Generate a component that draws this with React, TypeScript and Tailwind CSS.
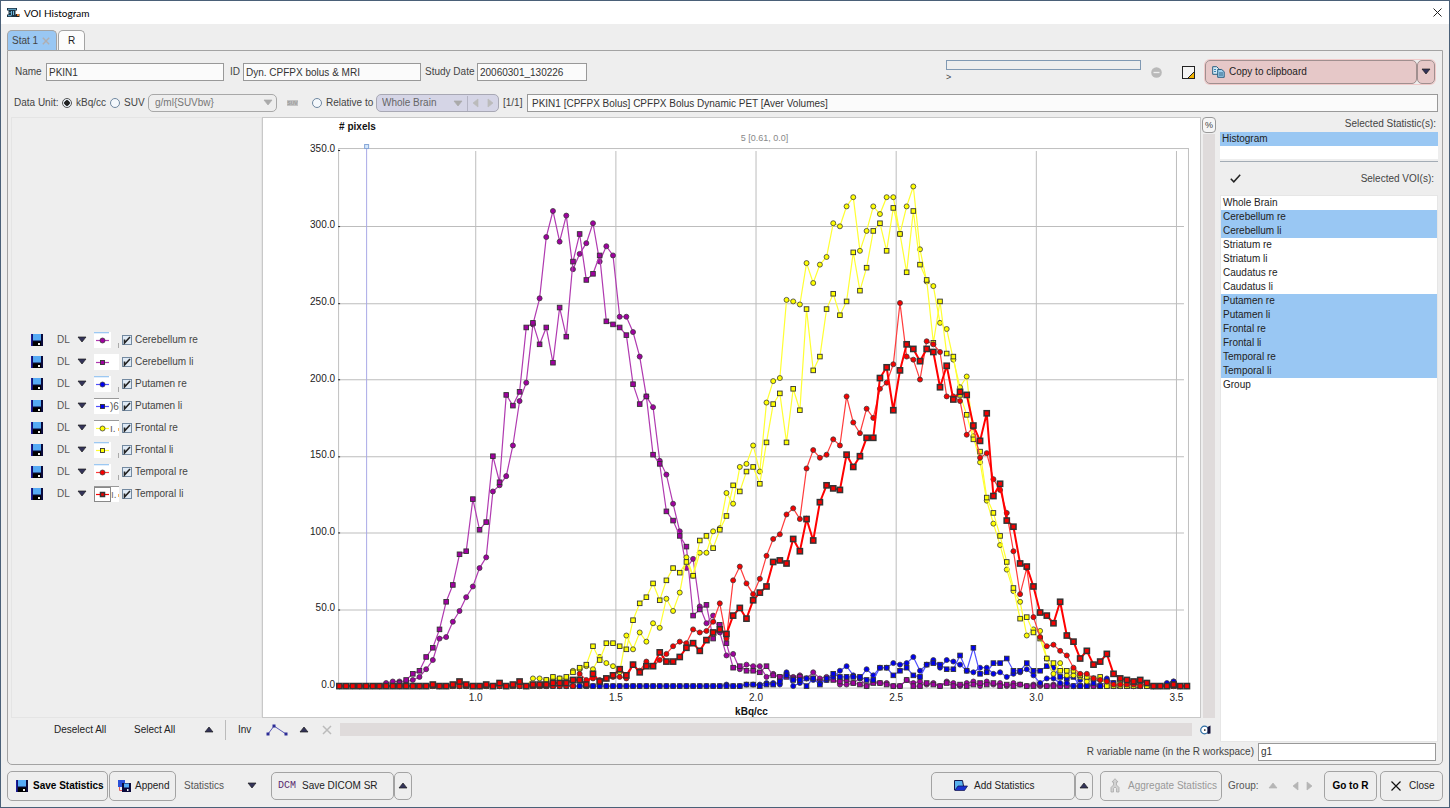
import { useState, type ReactNode } from 'react';
import clsx from 'clsx';

type Shape = 'circle' | 'square';

interface Series {
  name: string;
  color: string;
  line: string;
  shape: Shape;
  bold?: boolean;
  swatch: 'short' | 'plain' | 'six' | 'one' | 'active';
  start: number;
  values: number[];
}

const BINS = 128;

// values begin at bin `start`, every bin outside is zero
const SERIES: Series[] = [
  {
    name: 'Cerebellum re', color: '#a000a0', line: '#b03ab0', shape: 'circle', swatch: 'short', start: 7,
    values: [
      2, 3, 3, 3, 4, 6, 11, 17, 31, 32, 42, 49, 58, 65, 77, 84, 127, 131, 137, 157, 186, 198, 236, 253, 293,
      310, 290, 307, 272, 282, 289, 302, 277, 287, 281, 241, 241, 231, 215, 189, 182, 147, 138, 119, 101, 77,
      83, 52, 41, 46, 35, 20, 21, 11, 14, 13, 13, 6, 8, 6, 8, 6, 7, 5, 9, 5, 6, 5, 1, 1, 2, 5, 0, 3, 2, 2, 0,
      0, 4, 2, 3, 1, 2, 0, 3, 2, 0, 2, 3, 0, 3, 1, 2, 0, 2, 1, 0, 1, 0, 0, 1, 0, 1, 0, 0, 1, 0, 0, 0, 1, 0, 0,
      0, 0, 0, 0, 0, 0, 3,
    ],
  },
  {
    name: 'Cerebellum li', color: '#a000a0', line: '#b03ab0', shape: 'square', swatch: 'plain', start: 9,
    values: [
      2, 4, 8, 10, 19, 25, 37, 55, 66, 86, 88, 122, 102, 107, 150, 133, 190, 183, 192, 234, 237, 223, 234, 211,
      247, 228, 277, 295, 265, 269, 281, 238, 236, 234, 229, 197, 184, 189, 151, 145, 114, 108, 98, 91, 46, 50,
      53, 31, 40, 28, 12, 13, 10, 10, 9, 13, 7, 6, 6, 5, 6, 5, 5, 3, 4, 4, 3, 4, 2, 1, 0, 2, 2, 1, 0, 0, 4, 0, 0,
      2, 1, 0, 2, 0, 1, 0, 1, 2, 1, 2, 0, 1, 0, 1, 0, 0, 1, 0, 0, 0,
    ],
  },
  {
    name: 'Putamen re', color: '#0000f0', line: '#5050ff', shape: 'circle', swatch: 'short', start: 58,
    values: [
      1, 0, 0, 1, 1, 1, 2, 2, 1, 9, 0, 2, 5, 4, 2, 4, 6, 10, 13, 7, 5, 11, 7, 12, 12, 15, 14, 15, 19, 10, 14, 17,
      12, 17, 16, 14, 10, 9, 12, 12, 8, 9, 6, 8, 9, 11, 7, 2, 5, 5, 2, 2, 0, 4, 5, 4, 4, 5, 2, 0, 0, 0, 0, 0, 0,
      0, 2, 3, 0, 0,
    ],
  },
  {
    name: 'Putamen li', color: '#0000f0', line: '#5050ff', shape: 'square', swatch: 'six', start: 61,
    values: [
      1, 1, 0, 1, 1, 3, 7, 4, 4, 0, 5, 1, 5, 8, 6, 6, 6, 6, 4, 4, 12, 12, 7, 10, 12, 7, 6, 14, 15, 14, 11, 11,
      20, 10, 25, 8, 9, 15, 15, 18, 10, 10, 15, 10, 10, 13, 12, 6, 5, 6, 0, 0, 2, 0, 3, 2,
    ],
  },
  {
    name: 'Frontal re', color: '#ffff00', line: '#ffff33', shape: 'circle', swatch: 'one', start: 29,
    values: [
      5, 5, 4, 5, 5, 5, 10, 11, 13, 11, 19, 15, 13, 9, 33, 24, 35, 29, 41, 38, 57, 49, 61, 84, 72, 87, 87, 101,
      103, 126, 119, 143, 145, 157, 140, 185, 199, 201, 252, 251, 249, 276, 263, 275, 280, 302, 300, 313, 319,
      284, 297, 313, 308, 319, 319, 295, 313, 326, 285, 264, 261, 237, 233, 213, 195, 202, 163, 146, 121, 106,
      92, 76, 62, 55, 33, 37, 36, 18, 8, 15, 7, 7, 6, 3, 5, 4, 2,
    ],
  },
  {
    name: 'Frontal li', color: '#ffff00', line: '#ffff33', shape: 'square', swatch: 'short', start: 31,
    values: [
      4, 6, 5, 6, 9, 12, 14, 26, 17, 28, 28, 26, 24, 43, 54, 58, 67, 56, 69, 77, 74, 81, 72, 95, 98, 90, 102,
      111, 131, 127, 140, 143, 132, 159, 184, 191, 159, 194, 180, 246, 206, 215, 246, 256, 242, 251, 283, 258,
      273, 297, 302, 284, 312, 295, 270, 310, 275, 265, 224, 251, 217, 215, 190, 177, 161, 153, 123, 113, 98,
      81, 64, 44, 45, 35, 31, 18, 15, 10, 10, 10, 7, 6, 5, 6, 0, 0, 3,
    ],
  },
  {
    name: 'Temporal re', color: '#f80000', line: '#ff3c3c', shape: 'circle', swatch: 'short', start: 36,
    values: [
      8, 4, 5, 4, 5, 6, 6, 5, 14, 10, 16, 13, 17, 21, 26, 29, 28, 37, 35, 36, 42, 54, 31, 69, 78, 67, 60, 70, 85,
      96, 99, 112, 116, 109, 142, 154, 149, 151, 161, 157, 189, 172, 165, 181, 175, 194, 198, 210, 250, 215, 213,
      200, 225, 223, 218, 189, 189, 186, 164, 169, 149, 152, 135, 128, 113, 88, 60, 77, 45, 32, 26, 27, 23, 20,
      12, 8, 8, 5, 4, 3, 1, 1, 1, 1, 0, 2,
    ],
  },
  {
    name: 'Temporal li', color: '#f80000', line: '#ff0000', shape: 'square', bold: true, swatch: 'active', start: 14,
    values: [
      1, 0, 0, 1, 3, 1, 0, 0, 1, 0, 2, 0, 1, 3, 0, 1, 1, 1, 2, 2, 2, 4, 4, 1, 8, 3, 5, 7, 11, 7, 14, 9, 13, 13, 22,
      16, 16, 19, 25, 28, 23, 30, 35, 37, 34, 46, 51, 44, 56, 61, 65, 81, 82, 80, 96, 88, 109, 95, 120, 131, 129,
      128, 151, 143, 150, 162, 162, 201, 208, 180, 206, 223, 220, 212, 220, 218, 195, 209, 187, 192, 190, 170,
      160, 178, 124, 132, 108, 104, 80, 78, 65, 48, 46, 41, 55, 33, 29, 18, 23, 14, 16, 21, 8, 5, 4, 3, 4, 2, 0,
      0, 0, 1, 0, 0,
    ],
  },
];

const VOIS = [
  'Whole Brain', 'Cerebellum re', 'Cerebellum li', 'Striatum re', 'Striatum li', 'Caudatus re', 'Caudatus li',
  'Putamen re', 'Putamen li', 'Frontal re', 'Frontal li', 'Temporal re', 'Temporal li', 'Group',
];

const px = (bin: number) => 76.3 + (bin * 20) / 3;
const py = (value: number) => 567.5 - value * 1.531;

const fieldClass = 'h-[18px] border border-[#999] bg-[#fbfbfb] px-0.5 text-[10px] text-[#333] outline-none';
const buttonClass = 'flex items-center rounded-[5px] border-[1.5px] border-[#a3a3a3] bg-[#eee] whitespace-nowrap';

const Tri = ({ dir, color = '#33335a' }: { dir: 'up' | 'down' | 'left' | 'right'; color?: string }) => {
  const points = {
    up: '1,7 9,7 5,2',
    down: '1,2 9,2 5,7',
    left: '7,1 7,9 2,5',
    right: '2,1 2,9 7,5',
  }[dir];
  return (
    <svg width="10" height="10" viewBox="0 0 10 10" className="shrink-0" aria-hidden="true">
      <polygon points={points} fill={color} stroke={color === '#33335a' ? '#1c1c1c' : color} strokeWidth="0.7" />
    </svg>
  );
};

const Floppy = ({ size = 12 }: { size?: number }) => (
  <svg width={size} height={size} viewBox="0 0 12 12" className="shrink-0" aria-hidden="true">
    <rect width="12" height="12" fill="#0a0a3c" />
    <rect x="0" y="0" width="1.5" height="12" fill="#1c1c9c" />
    <rect x="2" y="0" width="8" height="6.5" fill="#55aaf5" />
    <rect x="2" y="7.5" width="8" height="4.5" fill="#000" />
    <rect x="7" y="9" width="2" height="2" fill="#eee" />
  </svg>
);

const Marker = ({ x, y, series, size }: { x: number; y: number; series: Series; size?: number }) => {
  const w = size ?? (series.bold ? 5.2 : 4.6);
  return series.shape === 'circle' ? (
    <circle cx={x} cy={y} r={2.5} fill={series.color} stroke="#3c3c3c" strokeWidth="0.8" />
  ) : (
    <rect
      x={x - w / 2} y={y - w / 2} width={w} height={w}
      fill={series.color} stroke="#333" strokeWidth={series.bold ? 1.5 : 0.9}
    />
  );
};

const Histogram = ({ visible }: { visible: Record<string, boolean> }) => (
  <svg viewBox="0 0 936 598" className="block h-auto w-full" fontFamily="Liberation Sans, Arial, sans-serif" fontSize="10" role="img" aria-label="VOI histogram">
    <text x="76" y="12" fontWeight="bold" fill="#111">{'# pixels'}</text>
    <text x="501" y="23" textAnchor="middle" fontSize="9" fill="#888">5 [0.61, 0.0]</text>
    <rect x="75.5" y="30.5" width="849" height="539" fill="none" stroke="#c0c0c0" />
    {[0, 50, 100, 150, 200, 250, 300, 350].map((v) => (
      <g key={v}>
        {v > 0 && v < 350 && (
          <line x1="76" x2="920" y1={Math.round(py(v)) + 0.5} y2={Math.round(py(v)) + 0.5} stroke="#bdbdbd" />
        )}
        <rect x="75" y={Math.round(py(v))} width="2" height="1" fill="#222" />
        <text x="72" y={py(v) + 2} textAnchor="end" fill="#222">{v.toFixed(1)}</text>
      </g>
    ))}
    {[1, 1.5, 2, 2.5, 3, 3.5].map((v, i) => (
      <g key={v}>
        <line x1={212.5 + i * 140} x2={212.5 + i * 140} y1="33" y2="569" stroke="#bdbdbd" />
        <text x={212.5 + i * 140} y="582" textAnchor="middle" fill="#222">{v.toFixed(1)}</text>
      </g>
    ))}
    <line x1="103.5" x2="103.5" y1="30" y2="569" stroke="#a9a9e6" />
    <rect x="101.5" y="26.5" width="4" height="4" fill="#d6e8fa" stroke="#86a6d8" />
    <text x="488" y="596" textAnchor="middle" fontWeight="bold" fill="#111">kBq/cc</text>
    {SERIES.filter((s) => visible[s.name]).map((s) => {
      const data = Array.from({ length: BINS }, (_, i) => s.values[i - s.start] ?? 0);
      return (
        <g key={s.name}>
          <polyline
            points={data.map((v, i) => `${px(i)},${py(v)}`).join(' ')}
            fill="none" stroke={s.line} strokeWidth={s.bold ? 2 : 1.2}
          />
          {data.map((v, i) => <Marker key={i} x={px(i)} y={py(v)} series={s} />)}
        </g>
      );
    })}
  </svg>
);

const Swatch = ({ series }: { series: Series }) => {
  const { swatch } = series;
  return (
    <svg width="25" height="16" viewBox="0 0 25 16" className="shrink-0" fontSize="10" fontFamily="Liberation Sans, Arial, sans-serif" aria-hidden="true">
      <rect width={swatch === 'short' ? 17 : 25} height="16" fill="#fff" />
      {swatch === 'short' && <rect width="15" height="1.3" fill="#9cc8f2" />}
      {swatch === 'short' && <rect x="24" y="11" width="1" height="5" fill="#aaa" />}
      {(swatch === 'six' || swatch === 'one' || swatch === 'active') && <rect width="25" height="1" fill="#999" />}
      {swatch === 'six' && <text x="16" y="12" fill="#555">)6</text>}
      {swatch === 'one' && <text x="16" y="12" fill="#555">ı.</text>}
      {swatch === 'active' && <text x="17" y="12" fill="#666">ı.</text>}
      {(swatch === 'one' || swatch === 'active') && <rect x="24" y="8" width="1" height="3" fill="#f3b765" />}
      {swatch === 'active' && <rect x="0.5" y="1.5" width="16" height="14" fill="#fff" stroke="#888" />}
      <line x1="2" x2="15" y1="8.5" y2="8.5" stroke={series.line} strokeWidth="1.2" />
      <Marker x={8.5} y={8.5} series={series} size={4} />
    </svg>
  );
};

const Check = () => (
  <svg width="10" height="10" viewBox="0 0 10 10" className="pointer-events-none absolute top-0 left-0" aria-hidden="true">
    <path d="M2.5 4.5v3.5L8 2" fill="none" stroke="#222" strokeWidth="1.6" />
  </svg>
);

interface RadioProps {
  name: string;
  label: string;
  defaultChecked?: boolean;
  className?: string;
}

const Radio = ({ name, label, defaultChecked, className }: RadioProps) => (
  <label className={clsx('flex items-center gap-1 whitespace-nowrap', className)}>
    <input
      type="radio"
      name={name}
      defaultChecked={defaultChecked}
      className="h-[10px] w-[10px] appearance-none rounded-full border border-[#6f87a0] bg-[#f4f8fc] checked:border-[#555] checked:bg-[radial-gradient(#222_0_2.5px,#e9f0f7_3px)]"
    />
    {label}
  </label>
);

const IconButton = ({ label, className, children }: { label: string; className?: string; children: ReactNode }) => (
  <button type="button" aria-label={label} className={clsx('flex shrink-0 items-center justify-center', className)}>
    {children}
  </button>
);

const ListRow = ({ name, selected, onClick }: { name: string; selected: boolean; onClick?: () => void }) => (
  <li>
    <button
      type="button"
      aria-pressed={selected}
      onClick={onClick}
      className={clsx('block h-[14px] w-full px-0.5 text-left leading-[14px] text-[#222]', selected && 'bg-[#99c7f3]')}
    >
      {name}
    </button>
  </li>
);

const TitleBar = () => (
  <header className="flex h-[23px] items-center bg-white pr-1 pl-1.5 text-black">
    <svg width="13" height="9" viewBox="0 0 13 9" aria-hidden="true">
      <path d="M0 0h10v2.5H8.500v4H10V9H0V6.500h1.500v-4H0z" fill="#1d3444" />
      <path d="M1 1.300h8M2.500 4.500h1M6.500 3v4M4.500 3v4M1 7.700h3.500" stroke="#6fb8dc" strokeWidth="1" />
      <rect x="9" y="6" width="3.500" height="3" fill="#222" />
      <rect x="10" y="6" width="2" height="2" fill="#e07a2c" />
    </svg>
    <h1 className="ml-1 font-[Lato,sans-serif] text-[10px]">VOI Histogram</h1>
    <IconButton label="Close window" className="ml-auto h-4 w-4">
      <svg width="9" height="9" viewBox="0 0 9 9"><path d="M.5.5l8 8M8.500.5l-8 8" stroke="#222" /></svg>
    </IconButton>
  </header>
);

const InfoRow = () => (
  <div className="mt-[9px] flex h-6 items-center pr-[7px] pl-[7px]">
    <label htmlFor="name" className="w-[31px]">Name</label>
    <input id="name" defaultValue="PKIN1" className={clsx(fieldClass, 'w-[178px]')} />
    <label htmlFor="study-id" className="ml-1.5 w-[13px]">ID</label>
    <input id="study-id" defaultValue="Dyn. CPFPX bolus & MRI" className={clsx(fieldClass, 'w-[178px]')} />
    <label htmlFor="study-date" className="ml-1 w-[52px] whitespace-nowrap">Study Date</label>
    <input id="study-date" defaultValue="20060301_130226" className={clsx(fieldClass, 'w-[110px]')} />
    <div className="ml-auto flex h-6 w-[195px] flex-col">
      <div className="h-[10px] shrink-0 border border-[#8099b3] bg-[#eee]" role="progressbar" aria-label="Progress" />
      <span className="text-[9px] leading-[14px]">&gt;</span>
    </div>
    <IconButton label="Stop" className="ml-[9px] h-4 w-3">
      <svg width="11" height="11" viewBox="0 0 11 11">
        <circle cx="5.500" cy="5.500" r="5.300" fill="#b9b9b9" />
        <path d="M2.500 5.500h6" stroke="#eee" strokeWidth="1.300" />
      </svg>
    </IconButton>
    <IconButton label="Notes" className="ml-5 h-4 w-[13px]">
      <svg width="13" height="13" viewBox="0 0 13 13">
        <rect x=".5" y=".5" width="12" height="12" fill="#f4f4f4" stroke="#222" />
        <path d="M12 6v6H6z" fill="#f2b200" />
        <path d="M12.500 5.500l-7 7" stroke="#222" />
      </svg>
    </IconButton>
    <div className="ml-[10px] flex h-6 rounded-[5px] shadow-[0_0_0_1px_#f0caca]">
      <button type="button" className="flex w-[212px] items-center gap-1 rounded-[5px] border-[1.5px] border-[#a08f8f] bg-[#e6c8c8] pl-1.5 text-[#222]">
        <svg width="13" height="12" viewBox="0 0 13 12" aria-hidden="true">
          <path d="M.7.700h4l2 2v5.600h-6z" fill="#d4eaf7" stroke="#2a5f80" />
          <path d="M2 3.500h2M2 5.500h2" stroke="#3d87b5" />
          <path d="M5.700 3.500h4l2.500 2.200v5.600H5.700z" fill="#9fd0ee" stroke="#2a5f80" />
          <path d="M7 7h4M7 9h4" stroke="#2a5f80" />
        </svg>
        Copy to clipboard
      </button>
      <IconButton label="Clipboard options" className="w-[18px] rounded-[5px] border-[1.5px] border-[#a08f8f] bg-[#e6c8c8]">
        <Tri dir="down" />
      </IconButton>
    </div>
  </div>
);

const UnitRow = () => (
  <div className="mt-[10px] flex h-[18px] items-center pr-1 pl-[6px]">
    <span className="w-[48px] whitespace-nowrap">Data Unit:</span>
    <Radio name="unit" label="kBq/cc" defaultChecked className="w-[48px]" />
    <Radio name="unit" label="SUV" className="w-[38px]" />
    <div className="relative">
      <select aria-label="SUV type" disabled className="h-[18px] w-[129px] appearance-none rounded-[5px] border-[1.5px] border-[#a8a8a8] bg-[#eee] pl-1.5 text-[#777] opacity-100">
        <option>{'g/ml{SUVbw}'}</option>
      </select>
      <span className="pointer-events-none absolute top-1 right-1"><Tri dir="down" color="#aaa" /></span>
    </div>
    <span className="ml-[10px] flex h-[6px] w-[11px] items-center justify-center bg-[#c4c4c4] text-[5px] font-bold text-[#999]">SUV</span>
    <Radio name="relative" label="Relative to" className="ml-[14px] w-[64px]" />
    <div className="flex h-[18px] w-[123px] items-center rounded-[5px] border-[1.5px] border-[#a8a8b4] bg-[#d5d5e6]">
      <div className="relative flex-1 border-r border-[#b4b4c4]">
        <select aria-label="Reference VOI" disabled className="h-[15px] w-full appearance-none bg-transparent pl-[5px] text-[#666] opacity-100">
          <option>Whole Brain</option>
        </select>
        <span className="pointer-events-none absolute top-[3px] right-1"><Tri dir="down" color="#aaa" /></span>
      </div>
      <IconButton label="Previous VOI" className="w-4"><Tri dir="left" color="#bbb" /></IconButton>
      <IconButton label="Next VOI" className="w-3.5"><Tri dir="right" color="#bbb" /></IconButton>
    </div>
    <span className="ml-1 w-6">[1/1]</span>
    <input
      aria-label="Series"
      defaultValue="PKIN1 [CPFPX Bolus] CPFPX Bolus Dynamic PET [Aver Volumes]"
      className={clsx(fieldClass, 'min-w-0 flex-1 pl-1')}
    />
  </div>
);

interface LegendProps {
  visible: Record<string, boolean>;
  onToggle: (name: string) => void;
}

const Legend = ({ visible, onToggle }: LegendProps) => (
  <ul className="flex w-[251px] shrink-0 flex-col justify-center border border-[#e4e4e4] pl-[19px]">
    {SERIES.map((s) => (
      <li key={s.name} className="flex h-[22px] items-center">
        <IconButton label={`Save ${s.name}`}><Floppy /></IconButton>
        <button type="button" className="ml-[14px] w-5 text-left text-[#555]">DL</button>
        <IconButton label={`${s.name} options`} className="mr-[7px]"><Tri dir="down" /></IconButton>
        <Swatch series={s} />
        <label className="ml-[3px] flex items-center gap-[3px]">
          <span className="relative h-[10px] w-[10px]">
            <input
              type="checkbox"
              checked={visible[s.name]}
              onChange={() => onToggle(s.name)}
              className="block h-[10px] w-[10px] appearance-none border border-[#7389a0] bg-[#dfeaf5]"
            />
            {visible[s.name] && <Check />}
          </span>
          {s.name}
        </label>
      </li>
    ))}
  </ul>
);

const ChartToolbar = ({ onAll }: { onAll: (value: boolean) => void }) => (
  <div className="flex h-6 items-center pl-[43px] text-[#222]">
    <button type="button" onClick={() => onAll(false)} className="w-[80px] text-left">Deselect All</button>
    <button type="button" onClick={() => onAll(true)} className="w-[70px] text-left">Select All</button>
    <IconButton label="Selection options"><Tri dir="up" /></IconButton>
    <span className="ml-[11px] h-5 w-px bg-[#bbb]" />
    <button type="button" className="ml-3 w-[28px] text-left">Inv</button>
    <IconButton label="Line style">
      <svg width="22" height="12" viewBox="0 0 22 12">
        <path d="M2 10l6-8 12 8" fill="none" stroke="#5a5ab4" />
        <path d="M.5 8.500h3v3h-3zM6.500.5h3v3h-3zM18.500 8.500h3v3h-3z" fill="#2c2c96" />
      </svg>
    </IconButton>
    <IconButton label="Line style options" className="ml-[11px]"><Tri dir="up" /></IconButton>
    <IconButton label="Clear" className="ml-[13px]">
      <svg width="10" height="10" viewBox="0 0 10 10"><path d="M1 1l8 8M9 1L1 9" stroke="#bbb" strokeWidth="1.500" /></svg>
    </IconButton>
    <div className="ml-2 h-[13px] flex-1 bg-[#dfdbdb]" />
    <IconButton label="Reset zoom" className="mr-[5px] ml-2">
      <svg width="11" height="10" viewBox="0 0 11 10">
        <circle cx="4.500" cy="5" r="3.800" fill="#fff" stroke="#2f6fa5" strokeWidth="1.200" />
        <rect x="4" y="4.300" width="1.500" height="1.500" fill="#222" />
        <path d="M7.500 2l3-1.500v8l-3 .5z" fill="#14143c" />
      </svg>
    </IconButton>
  </div>
);

const Sidebar = () => {
  const [selected, setSelected] = useState(
    VOIS.filter((v) => /^(Cerebellum|Putamen|Frontal|Temporal)/.test(v))
  );
  const toggle = (name: string) =>
    setSelected((prev) => (prev.includes(name) ? prev.filter((v) => v !== name) : [...prev, name]));

  return (
    <aside className="flex w-[218px] shrink-0 flex-col">
      <h2 className="h-[15px] pr-0.5 text-right leading-[13px]">Selected Statistic(s):</h2>
      <ul aria-label="Selected statistics" className="h-[27px] bg-white">
        <ListRow name="Histogram" selected />
      </ul>
      <hr className="mt-[2px] border-[#a3acb5]" />
      <div className="flex h-[33px] items-center justify-between pr-1 pl-[10px]">
        <IconButton label="Apply selection">
          <svg width="11" height="9" viewBox="0 0 11 9"><path d="M.8 4.800l3 3L10.200.8" fill="none" stroke="#222" strokeWidth="1.500" /></svg>
        </IconButton>
        <h2>Selected VOI(s):</h2>
      </div>
      <ul aria-label="Selected VOIs" className="flex-1 border border-[#e6e6e6] bg-white">
        {VOIS.map((v) => (
          <ListRow key={v} name={v} selected={selected.includes(v)} onClick={() => toggle(v)} />
        ))}
      </ul>
    </aside>
  );
};

const ActionBar = () => (
  <footer className="mt-[6px] flex h-[30px] items-center px-[6px] text-[#222]">
    <button type="button" className={clsx(buttonClass, 'h-[30px] w-[101px] gap-[5px] pl-2 font-bold text-black')}>
      <Floppy /> Save Statistics
    </button>
    <button type="button" className={clsx(buttonClass, 'ml-px h-[30px] w-[67px] gap-1 pl-2')}>
      <svg width="13" height="12" viewBox="0 0 13 12" aria-hidden="true">
        <rect width="7" height="7" fill="#2a50d8" />
        <path d="M1.500 7v3.500H4" fill="none" stroke="#e06060" />
        <rect x="4" y="3" width="9" height="9" fill="#0a0a3c" />
        <rect x="6" y="3.500" width="5" height="4" fill="#55aaf5" />
        <rect x="9" y="9" width="1.500" height="2" fill="#eee" />
      </svg>
      Append
    </button>
    <div className="relative ml-2">
      <select aria-label="Statistics" className="h-5 w-[73px] appearance-none bg-transparent text-[#555]">
        <option>Statistics</option>
      </select>
      <span className="pointer-events-none absolute top-[5px] right-0"><Tri dir="down" /></span>
    </div>
    <button type="button" className={clsx(buttonClass, 'ml-[14px] h-[28px] w-[123px] gap-1.5 pl-1.5')}>
      <span className="font-['Liberation_Mono',monospace] text-[10px] text-[#5a2a6e]">DCM</span> Save DICOM SR
    </button>
    <IconButton label="DICOM options" className={clsx(buttonClass, 'h-[28px] w-[18px]')}><Tri dir="up" /></IconButton>

    <button type="button" className={clsx(buttonClass, 'ml-auto h-[28px] w-[144px] gap-1.5 pl-[22px]')}>
      <svg width="14" height="11" viewBox="0 0 14 11" aria-hidden="true">
        <path d="M.5 10V.5h8L9.500 6" fill="#58b0ee" stroke="#16164c" />
        <path d="M.8 10.500L4 6h9.500l-3 4.500z" fill="#1830d0" stroke="#10104c" strokeWidth=".7" />
      </svg>
      Add Statistics
    </button>
    <IconButton label="Add options" className={clsx(buttonClass, 'h-[28px] w-[18px]')}><Tri dir="up" /></IconButton>
    <button type="button" disabled className={clsx(buttonClass, 'ml-[7px] h-[30px] w-[122px] gap-2 pl-[9px] text-[#999]')}>
      <svg width="10" height="15" viewBox="0 0 10 15" aria-hidden="true">
        <path d="M5 .7L8 4H6.500v3L9 9.500V14H6.500v-3.500L5 9l-1.500 1.500V14H1V9.500L3.500 7V4H2z" fill="#d2d2d2" stroke="#aaa" strokeWidth=".8" />
      </svg>
      Aggregate Statistics
    </button>
    <span className="ml-1.5 w-[40px] text-[#555]">Group:</span>
    <IconButton label="Group up"><Tri dir="up" color="#b5b5b5" /></IconButton>
    <IconButton label="Previous group" className="ml-[13px]"><Tri dir="left" color="#b5b5b5" /></IconButton>
    <IconButton label="Next group" className="ml-1"><Tri dir="right" color="#b5b5b5" /></IconButton>
    <button type="button" className={clsx(buttonClass, 'ml-[9px] h-[30px] w-[53px] justify-center font-bold text-black')}>Go to R</button>
    <button type="button" className={clsx(buttonClass, 'ml-[3px] h-[30px] w-[63px] gap-2 pl-[10px]')}>
      <svg width="10" height="10" viewBox="0 0 10 10" aria-hidden="true"><path d="M.5.5l9 9M9.500.5l-9 9" stroke="#111" strokeWidth="1.200" /></svg>
      Close
    </button>
  </footer>
);

export default function App() {
  const [visible, setVisible] = useState<Record<string, boolean>>(
    Object.fromEntries(SERIES.map((s) => [s.name, true]))
  );

  const toggle = (name: string) => setVisible((prev) => ({ ...prev, [name]: !prev[name] }));
  const setAll = (value: boolean) => setVisible(Object.fromEntries(SERIES.map((s) => [s.name, value])));

  return (
    <div className="flex min-h-screen flex-col border border-[#4a6078] bg-[#eee] font-['Liberation_Sans',Arial,sans-serif] text-[10px] leading-[14px] text-[#444]">
      <TitleBar />
      <nav className="mt-[6px] flex h-5 items-stretch gap-px px-[6px]">
        <div className="flex w-[50px] items-center justify-between rounded-t-[5px] border-[1.5px] border-b-0 border-[#a3a3a3] bg-[#99c7f3] pr-1.5 pl-1">
          <button type="button" className="whitespace-nowrap">Stat 1</button>
          <button type="button" aria-label="Close tab">
            <svg width="8" height="8" viewBox="0 0 8 8"><path d="M.8.800l6.400 6.400M7.200.8L.8 7.200" stroke="#b0aeb0" strokeWidth="1.400" /></svg>
          </button>
        </div>
        <button type="button" className="w-[27px] rounded-t-[5px] border-[1.5px] border-b-0 border-[#a3a3a3] bg-[#fcfcfc] text-[#222]">R</button>
      </nav>

      <main className="mx-[6px] flex flex-col rounded-b-[5px] border border-[#a3a3a3] pb-[3px]">
        <InfoRow />
        <UnitRow />
        <div className="mt-[5px] flex pr-1 pl-[3px]">
          <div className="flex min-w-0 flex-1 flex-col">
            <div className="flex">
              <Legend visible={visible} onToggle={toggle} />
              <div className="min-w-0 flex-1 border border-[#c8c8c8] bg-white">
                <Histogram visible={visible} />
              </div>
              <div className="ml-px flex w-[14px] flex-col items-center">
                <button type="button" className="h-4 w-[14px] rounded-[4px] border border-[#999] bg-[#f6f6f6] text-[9px] leading-[14px]">%</button>
                <div className="mt-px w-3 flex-1 bg-[#dfdbdb]" />
              </div>
            </div>
            <ChartToolbar onAll={setAll} />
          </div>
          <div className="w-1 shrink-0" />
          <Sidebar />
        </div>
        <div className="mt-[1px] flex items-center justify-end pr-1.5">
          <label htmlFor="r-var" className="mr-1">R variable name (in the R workspace)</label>
          <input id="r-var" defaultValue="g1" className={clsx(fieldClass, 'w-[178px] bg-white')} />
        </div>
      </main>

      <ActionBar />
    </div>
  );
}
